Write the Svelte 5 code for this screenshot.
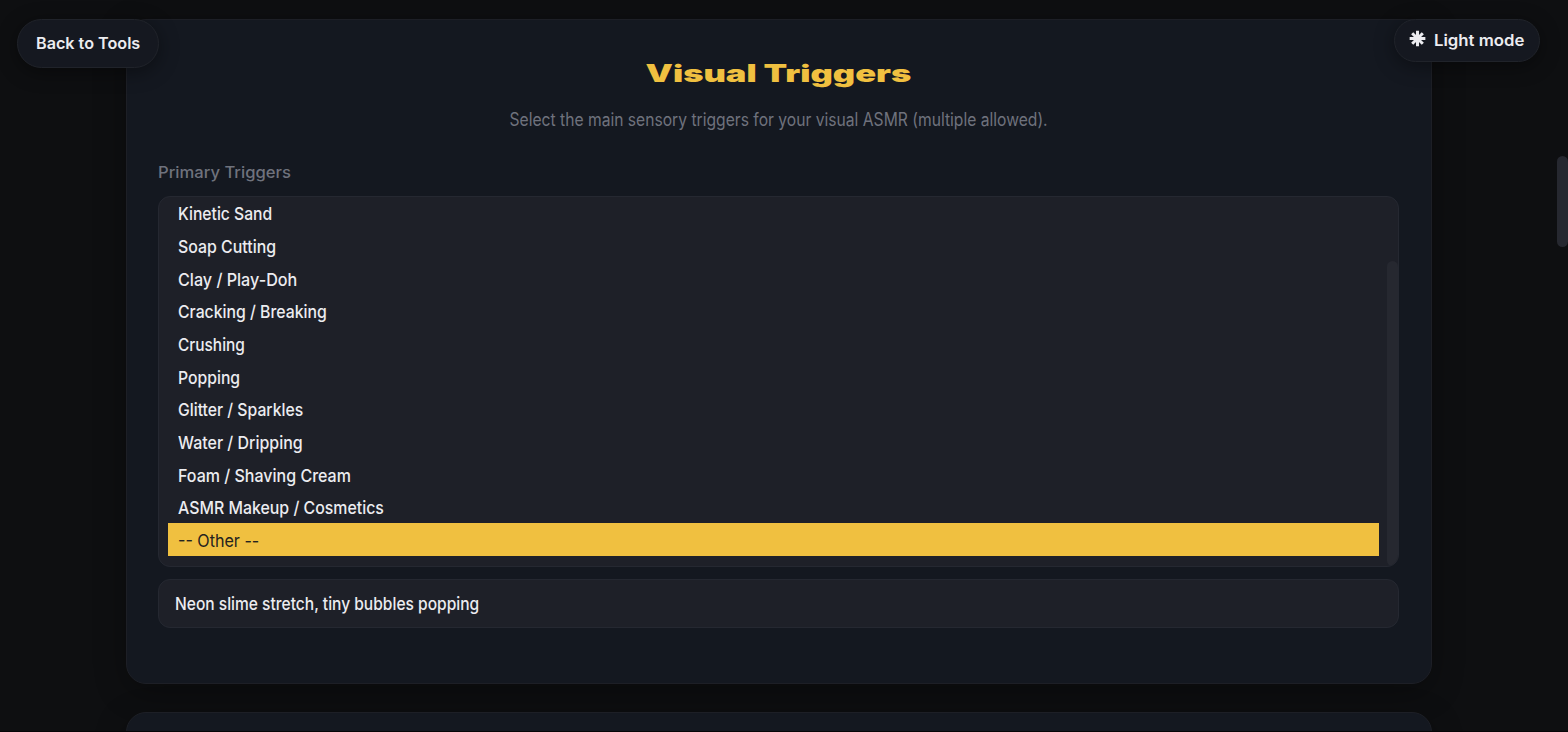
<script>
	const triggers = [
		{ label: 'Kinetic Sand', width: 94 },
		{ label: 'Soap Cutting', width: 98 },
		{ label: 'Clay / Play-Doh', width: 119 },
		{ label: 'Cracking / Breaking', width: 149 },
		{ label: 'Crushing', width: 67 },
		{ label: 'Popping', width: 62 },
		{ label: 'Glitter / Sparkles', width: 125 },
		{ label: 'Water / Dripping', width: 125 },
		{ label: 'Foam / Shaving Cream', width: 173 },
		{ label: 'ASMR Makeup / Cosmetics', width: 206 },
		{ label: '-- Other --', width: 81 }
	];

	let selected = '-- Other --';
	let custom = 'Neon slime stretch, tiny bubbles popping';

	// stretch or squeeze a label so that it fills the given width
	function fit(node, width) {
		const natural = node.offsetWidth;
		node.style.transform = `scaleX(${width / natural})`;
	}
</script>

<div class="page">
	<button class="pill back"><span class="fit" use:fit={104}>Back to Tools</span></button>
	<button class="pill mode">
		<svg width="17" height="17" viewBox="0 0 16 16">
			<path d="M8 .6v14.8M.6 8h14.8M3 3l10 10M13 3L3 13" />
		</svg>
		<span class="fit" use:fit={90}>Light mode</span>
	</button>

	<main>
		<section class="card">
			<h2><span class="fit" use:fit={266}>Visual Triggers</span></h2>
			<p class="hint"><span class="fit" use:fit={538}>Select the main sensory triggers for your visual ASMR (multiple allowed).</span></p>
			<div class="label"><span class="fit" use:fit={133}>Primary Triggers</span></div>
			<div class="select">
				<ul>
				{#each triggers as trigger}
					<li class:selected={trigger.label === selected}>
						<span class="fit" use:fit={trigger.width}>{trigger.label}</span>
					</li>
				{/each}
				</ul>
				<div class="track"></div>
			</div>
			<div class="field"><span class="fit" use:fit={304}>{custom}</span></div>
		</section>
		<section class="card next"></section>
	</main>

	<div class="scrollbar"></div>
	<div class="edge"></div>
</div>

<style>
	:global(body) {
		background: #0e0f11;
		overflow: hidden;
	}
	.page {
		position: relative;
		box-sizing: border-box;
		height: 732px;
		padding: 19px 136px 0 126px;
		overflow: hidden;
		font-family: Inter, "Liberation Sans", sans-serif;
		color: #ececf0;
	}
	.fit {
		display: inline-block;
		white-space: nowrap;
		transform-origin: left center;
	}
	.card {
		box-sizing: border-box;
		height: 665px;
		padding: 37px 32px 0 31px;
		border: 1px solid #1d1f26;
		border-radius: 20px;
		background: #141820;
		box-shadow: 0 8px 32px rgba(0, 0, 0, .3);
	}
	.next {
		margin-top: 28px;
	}
	h2 {
		display: flex;
		justify-content: center;
		margin: 0;
		font-size: 24px;
		font-weight: 900;
		line-height: 34px;
		color: #f0c040;
	}
	h2 .fit, .hint .fit {
		transform-origin: center;
	}
	.hint {
		display: flex;
		justify-content: center;
		margin: 16px 0 0;
		font-size: 18px;
		line-height: 26px;
		color: #6f727d;
	}
	.label {
		margin-top: 28px;
		font-size: 16px;
		font-weight: 500;
		line-height: 22px;
		color: #6f727d;
	}
	.select {
		position: relative;
		display: flex;
		flex-direction: column;
		justify-content: flex-end;
		box-sizing: border-box;
		height: 371px;
		margin: 13px 0 0;
		padding: 0 19px 10px 9px;
		border: 1px solid #252831;
		border-radius: 12px;
		background: #1e2028;
		overflow: hidden;
	}
	ul {
		margin: 0;
		padding: 0;
		list-style: none;
	}
	li {
		height: 32.7px;
		padding-left: 9.5px;
		font-size: 17.5px;
		font-weight: 450;
		line-height: 35px;
	}
	.selected {
		height: 33px;
		background: #f0c040;
		color: #24231f;
		font-weight: 400;
	}
	.track {
		position: absolute;
		right: 0;
		bottom: 0;
		width: 11px;
		height: 305px;
		border-radius: 6px;
		background: #262830;
	}
	.field {
		box-sizing: border-box;
		height: 49px;
		margin-top: 12px;
		padding-left: 16px;
		border: 1px solid #252831;
		border-radius: 12px;
		background: #1e2028;
		font-size: 17.5px;
		font-weight: 450;
		line-height: 47px;
	}
	.pill {
		position: absolute;
		z-index: 1;
		display: flex;
		align-items: center;
		box-sizing: border-box;
		border: 1px solid #20232a;
		border-radius: 25px;
		background: #151820;
		box-shadow: 0 4px 20px rgba(0, 0, 0, .4);
		font-family: inherit;
		font-size: 16px;
		font-weight: 600;
		color: #ececf0;
	}
	.back {
		top: 19px;
		left: 17px;
		width: 142px;
		height: 49px;
		padding: 0 0 2px 18px;
	}
	.mode {
		top: 19px;
		left: 1394px;
		width: 146px;
		height: 43px;
		gap: 8px;
		padding: 0 0 2px 14px;
	}
	.mode svg {
		flex: none;
		margin-top: -2px;
		fill: none;
		stroke: #ececf0;
		stroke-width: 2.8;
	}
	.scrollbar {
		position: absolute;
		top: 156px;
		right: 0;
		width: 11px;
		height: 91px;
		border-radius: 6px;
		background: #262830;
	}
	.edge {
		position: absolute;
		right: 0;
		bottom: 0;
		left: 0;
		height: 1px;
		background: #060507;
	}
</style>
